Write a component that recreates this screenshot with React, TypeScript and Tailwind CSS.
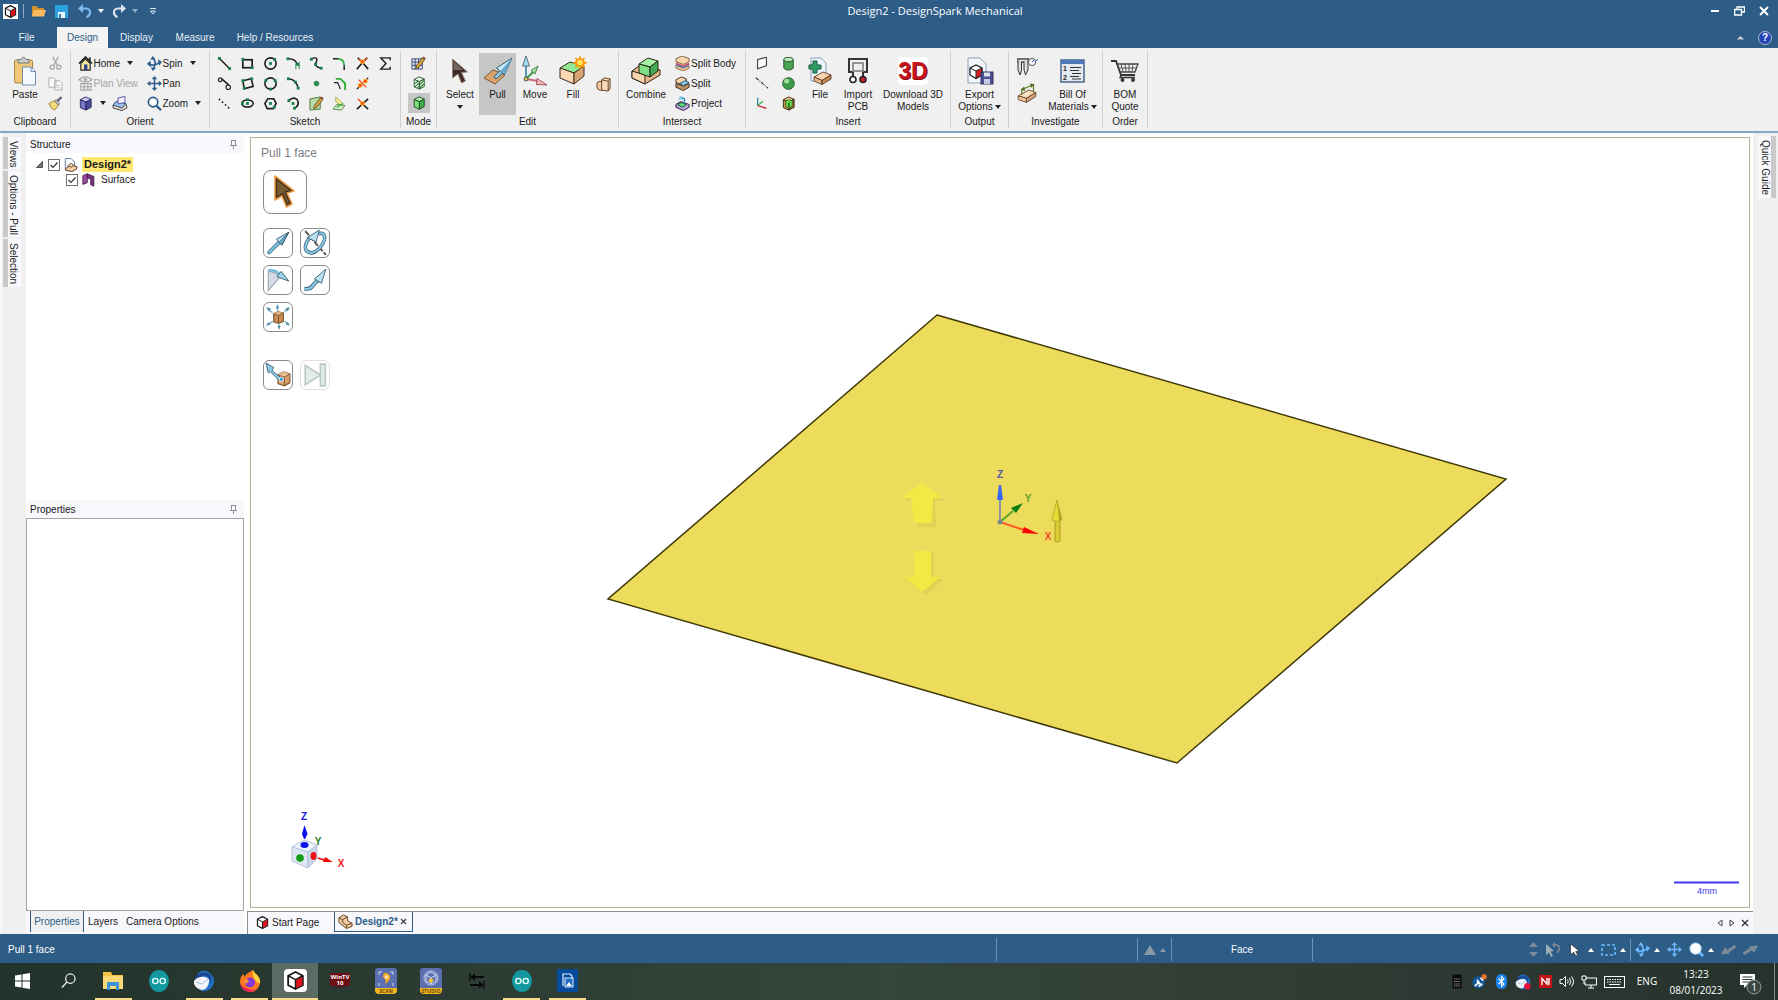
import type { ReactNode } from 'react';

type IconProps = { w?: number; h?: number; box?: string; children: ReactNode };

const Icon = ({ w = 15, h = w, box = '0 0 16 16', children }: IconProps) => (
    <svg width={w} height={h} viewBox={box} fill="none" className="shrink-0" aria-hidden="true">
        {children}
    </svg>
);

const Caret = ({ color = '#222', up = false }: { color?: string; up?: boolean }) => (
    <Icon w={6} h={4} box="0 0 6 4">
        <path d={up ? 'M0 4L3 0L6 4Z' : 'M0 0L3 4L6 0Z'} fill={color} />
    </Icon>
);

/* ---------- shared drawings ---------- */

type BoxColors = { top: string; left: string; right: string; line?: string };

const cubeShape = ({ top, left, right, line = '#1c1c1c' }: BoxColors) => (
    <g stroke={line} strokeWidth="1" strokeLinejoin="round">
        <path d="M2.500 4L8 1L14 3.500L8.500 6.500Z" fill={top} />
        <path d="M2.500 4L8.500 6.500V15L2.500 12.500Z" fill={left} />
        <path d="M8.500 6.500L14 3.500V12L8.500 15Z" fill={right} />
    </g>
);

const Logo = ({ size = 16 }: { size?: number }) => (
    <Icon w={size}>
        <path d="M8 .8L14.200 4V12L8 15.200L1.800 12V4Z" fill="#fff" stroke="#181818" strokeWidth="1.500" strokeLinejoin="round" />
        <path d="M8.300 7.300L13.800 4.500V11.700L8.300 14.600Z" fill="#e0131c" />
        <path d="M1.800 4L8 7.200L14.200 4M8 7.200V15" stroke="#181818" strokeWidth="1.200" />
    </Icon>
);

const SpinIcon = ({ color = '#2e5f8c' }: { color?: string }) => (
    <Icon w={15}>
        <path d="M1 8.500Q8 11.500 13 7M6.500 2Q11 8 6.500 14" stroke={color} strokeWidth="1.800" />
        <path d="M4 5L0 8L4 12ZM11.500 3.500L16 6L13 10.500ZM3.500 4L6 0L9 3.500ZM4 12L6 16L9.500 13Z" fill={color} />
    </Icon>
);

const PanIcon = ({ color = '#2e5f8c' }: { color?: string }) => (
    <Icon w={15}>
        <path d="M2 8H14M8 2V14" stroke={color} strokeWidth="1.600" />
        <path d="M3.500 5L0 8L3.500 11ZM12.500 5L16 8L12.500 11ZM5 3.500L8 0L11 3.500ZM5 12.500L8 16L11 12.500Z" fill={color} />
    </Icon>
);

const PencilShape = () => (
    <g>
        <path d="M6 10L12 2L14.500 4L8.500 12L5 13.500Z" fill="#d9a441" stroke="#4d3510" strokeWidth=".8" />
        <path d="M12 2L13.200 .5L15.800 2.500L14.500 4Z" fill="#8a4a2a" />
    </g>
);

const BrickShape = () => (
    <g stroke="#6b4a2c" strokeWidth=".8" strokeLinejoin="round">
        <path d="M1 11L10 6L16 8L8 13Z" fill="#fbe0c0" />
        <path d="M1 11L8 13V16.500L1 14Z" fill="#f3cba2" />
        <path d="M8 13L16 8V11.500L8 16.500Z" fill="#d3a077" />
    </g>
);

/* blue cone arrow used by the pull tools, drawn on a 24 grid */
const BlueArrow = () => (
    <g stroke="#33586c" strokeWidth=".8" strokeLinejoin="round">
        <path d="M2.500 20L12.500 10L14.500 12L4.500 22Q2 22.500 2.500 20Z" fill="#79bfe0" />
        <path d="M22 2L10.500 8.500L15.500 14Z" fill="#b9e0f0" />
        <path d="M22 2L13 11.500L15.500 14Z" fill="#6eaecd" />
    </g>
);

/* ---------- small ribbon icons ---------- */

const G = '#168048';
const K = '#1d1d1d';

const dots = (pts: [number, number][]) => (
    <>
        {pts.map(([x, y]) => (
            <rect key={`${x}-${y}`} x={x - 1.5} y={y - 1.5} width="3" height="3" fill={G} />
        ))}
    </>
);

const burst = (x: number, y: number) => (
    <g>
        <circle cx={x} cy={y} r="2.600" fill="#ffb52b" />
        <circle cx={x} cy={y} r="1.500" fill="#f1441c" />
    </g>
);

const sketchTools: { name: string; art: ReactNode }[] = [
    { name: 'Line', art: <><path d="M3 3L13 13" stroke={K} strokeWidth="1.600" />{dots([[2.5, 2.5], [13.5, 13.5]])}</> },
    { name: 'Rectangle', art: <><rect x="3" y="4" width="10" height="8.500" stroke={K} strokeWidth="1.800" />{dots([[3, 3.5], [13, 12.5]])}</> },
    { name: 'Circle', art: <><circle cx="8" cy="8" r="6" stroke={K} strokeWidth="1.700" />{dots([[8, 8], [12.5, 3.5]])}</> },
    { name: 'Tangent Arc', art: <><path d="M3 3Q10 3 12 9" stroke={K} strokeWidth="1.700" /><path d="M14 6V14M10.500 8V14" stroke={G} strokeWidth="1" />{dots([[2, 3], [12.5, 9]])}</> },
    { name: 'Spline', art: <><path d="M2.500 3Q10 0 8 6Q4 11 13 13" stroke={K} strokeWidth="1.600" />{dots([[2.5, 3.5], [7, 9], [13, 13]])}</> },
    { name: 'Corner', art: <><path d="M1 3H7M13 9V15" stroke={K} strokeWidth="1.600" /><path d="M6 3Q13 3 13 10" stroke="#2fae3c" strokeWidth="1.800" /></> },
    { name: 'Trim', art: <><path d="M2 14L8 7L14 14M8 7L3 2M8 7L13 2" stroke={K} strokeWidth="1.700" /><path d="M8 7L13 2M8 7L4 3" stroke="#ef4a20" strokeWidth="1.500" />{burst(8, 6)}</> },
    { name: 'Equation', art: <path d="M13 4.500V2H3L8.500 8L3 14H13V11.500" stroke={K} strokeWidth="1.500" /> },
    { name: 'Tangent Line', art: <><circle cx="3.500" cy="4" r="2" stroke={K} strokeWidth="1.200" /><path d="M5 3L12.500 9.500" stroke={K} strokeWidth="1.600" /><circle cx="12" cy="12" r="2.400" stroke={K} strokeWidth="1.200" /></> },
    { name: 'Three Point Rectangle', art: <><path d="M3 5L12 3L14 11L4.500 13.500Z" stroke={K} strokeWidth="1.700" />{dots([[3, 5], [12.5, 3], [4.5, 13]])}</> },
    { name: 'Three Point Circle', art: <><circle cx="8" cy="8" r="6" stroke={K} strokeWidth="1.700" />{dots([[3, 5], [13, 5], [8, 14]])}</> },
    { name: 'Three Point Arc', art: <><path d="M3 3Q11 4 13 13" stroke={K} strokeWidth="1.700" />{dots([[2.5, 3], [10, 6.500], [13, 13]])}</> },
    { name: 'Point', art: <><circle cx="8" cy="8" r="2.500" fill="#2a9a50" stroke="#146535" strokeWidth=".8" /></> },
    { name: 'Offset Curve', art: <><path d="M2 7H6L9 14" stroke={K} strokeWidth="1.300" /><path d="M4 3H9L14 8V15" stroke="#2fae3c" strokeWidth="2" /></> },
    { name: 'Split Curve', art: <><path d="M2 14L14 2" stroke={K} strokeWidth="1.500" strokeDasharray="4 1" /><path d="M4 4L12 12" stroke="#ef4a20" strokeWidth="1.200" />{burst(5.5, 10)}{burst(11, 5.5)}</> },
    { name: 'Construction Line', art: <path d="M2 3L14 14" stroke={K} strokeWidth="1.700" strokeDasharray="1.800 2.600" /> },
    { name: 'Ellipse', art: <><ellipse cx="8" cy="8" rx="6" ry="3.800" stroke={K} strokeWidth="1.700" />{dots([[8, 8], [8, 4], [2.5, 8]])}</> },
    { name: 'Polygon', art: <><path d="M5 3L11.500 3L14 8L11 13.500H4.500L2 8Z" stroke={K} strokeWidth="1.700" />{dots([[8, 8], [12, 12]])}</> },
    { name: 'Swept Arc', art: <><path d="M3 5Q8 0 12 4Q15 10 9 13" stroke={K} strokeWidth="1.700" />{dots([[3, 5], [7.5, 8], [9, 13]])}</> },
    { name: 'Face Curve', art: <><path d="M1 3L12 1V14L1 15Z" fill="#b8d9a8" stroke="#4d7a42" /><PencilShape /></> },
    { name: 'Project to Sketch', art: <><path d="M4 1L11 7V11L4 6Z" fill="#f6ef8f" stroke="#a09a50" strokeWidth=".8" /><path d="M1 14L5 9L14 10L10 15Z" fill="#d7ecc8" stroke="#568a48" /><path d="M5 12L12 8" stroke="#2fae3c" strokeWidth="1.500" /></> },
    { name: 'Create Corner', art: <><path d="M2 14L14 3M8 8.500L14 14" stroke={K} strokeWidth="1.700" /><path d="M3 3L8 8" stroke="#ef4a20" strokeWidth="1.500" />{burst(8, 8)}</> },
];

/* ---------- ribbon building blocks ---------- */

const Group = ({ label, width, children }: { label: string; width: string; children: ReactNode }) => (
    <section className={`flex h-[77px] shrink-0 flex-col border-r border-[#cfcfcf] ${width}`}>
        <div className="flex h-[65px] justify-center pt-0.5">{children}</div>
        <h2 className="text-center leading-3">{label}</h2>
    </section>
);

type BigProps = { lines: string[]; width: string; caret?: 'below' | 'inline'; active?: boolean; children: ReactNode };

const BigButton = ({ lines, width, caret, active, children }: BigProps) => (
    <button className={`flex h-[62px] shrink-0 flex-col items-center leading-3 ${width} ${active ? 'bg-[#c6c6c6]' : ''}`}>
        <span className="flex h-9 items-center justify-center">{children}</span>
        {lines.map((line, i) => (
            <span key={line} className="flex items-center gap-0.5 whitespace-nowrap">
                {line}
                {caret === 'inline' && i === lines.length - 1 && <Caret />}
            </span>
        ))}
        {caret === 'below' && <span className="flex h-3 items-center"><Caret /></span>}
    </button>
);

const SmallButton = ({ label, caret, dim, children }: { label?: string; caret?: boolean; dim?: boolean; children: ReactNode }) => (
    <button className={`flex h-5 items-center gap-px whitespace-nowrap ${dim ? 'text-[#a6a6a6]' : ''}`} disabled={dim}>
        {children}
        {label}
        {caret && <span className="ml-1.5"><Caret /></span>}
    </button>
);

const IconButton = ({ name, children }: { name: string; children: ReactNode }) => (
    <button aria-label={name} className="flex h-5 w-full items-center justify-center">{children}</button>
);

const Ribbon = () => (
    <div className="flex h-[83px] shrink-0 overflow-hidden bg-[#f0f0f0] pt-[3px]">
        <Group label="Clipboard" width="w-[71px]">
            <BigButton lines={['Paste']} width="w-11">
                <Icon w={24} h={30} box="0 0 24 30">
                    <rect x="1.500" y="4" width="18" height="23" rx="1.500" fill="#f0c877" stroke="#a88345" />
                    <path d="M5 7V3.500H8Q10.500 -1 13 3.500H16V7Z" fill="#c8ccd0" stroke="#777" />
                    <path d="M9.500 11H18L22.500 15.500V29H9.500Z" fill="#f5f9fe" stroke="#6f8fb5" />
                    <path d="M18 11V15.500H22.500" stroke="#6f8fb5" />
                </Icon>
            </BigButton>
            <div className="w-5 pr-1">
                <IconButton name="Cut">
                    <Icon><path d="M5 1L10 10M11 1L6 10" stroke="#aaa" strokeWidth="1.400" /><circle cx="4.500" cy="12" r="2.200" stroke="#aaa" strokeWidth="1.400" /><circle cx="11.500" cy="12" r="2.200" stroke="#aaa" strokeWidth="1.400" /></Icon>
                </IconButton>
                <IconButton name="Copy">
                    <Icon><path d="M1 2H6L8.500 4.500V12H1ZM7 5H12L15 8V15H7Z" fill="#f7f7f7" stroke="#b0b0b0" /><path d="M9 10H13M9 12.500H13" stroke="#c4c4c4" /></Icon>
                </IconButton>
                <IconButton name="Format Painter">
                    <Icon><path d="M1 8L7 5L11 10L7 15Q3 14 1 8Z" fill="#f3dc7a" stroke="#9a8130" /><path d="M7 5L9 4L12.500 8.500L11 10Z" fill="#c9ccd0" stroke="#666" strokeWidth=".8" /><path d="M10 5.500L14.500 1" stroke="#6a5a7c" strokeWidth="2.400" /></Icon>
                </IconButton>
            </div>
        </Group>

        <Group label="Orient" width="w-[139px]">
            <div className="w-[69px]">
                <SmallButton label="Home" caret>
                    <Icon><path d="M1 8L8 1L15 8" stroke="#222" strokeWidth="1.600" /><path d="M11.500 1.500H13.500V6L11.500 4Z" fill="#222" /><path d="M3 8L8 3L13 8V15H3Z" fill="#f4e59a" stroke="#222" strokeWidth="1.200" /><rect x="6.500" y="9" width="3.500" height="6" fill="#27408f" /></Icon>
                </SmallButton>
                <SmallButton label="Plan View" dim>
                    <Icon><path d="M1 4Q8 -2 15 4Q8 9 1 4Z" stroke="#a5a5a5" strokeWidth="1.300" /><circle cx="8" cy="3.800" r="1.800" fill="#a5a5a5" /><path d="M3 8H14V15H3ZM3 11.500H14M6.500 8V15M10.500 8V15" stroke="#a5a5a5" strokeWidth="1.200" /></Icon>
                </SmallButton>
                <div className="flex gap-1.5">
                    <SmallButton caret><Icon>{cubeShape({ top: '#c8c8f4', left: '#7a78c8', right: '#4c4a9c', line: '#2b2a63' })}</Icon></SmallButton>
                    <SmallButton><Icon w={16}><path d="M1 10L4 7L14 9L15 13L10 15.500L1 13Z" fill="#f6d8b4" stroke="#3c4a66" /><path d="M1 10L4 6.500L14 8.500L10 13Z" fill="#9cc4ec" stroke="#2f4f7c" /><path d="M6 3L13 1.500V7.500L6 9Z" fill="#f2f2ff" stroke="#5c5ab0" /></Icon></SmallButton>
                </div>
            </div>
            <div className="w-14">
                <SmallButton label="Spin" caret><SpinIcon /></SmallButton>
                <SmallButton label="Pan"><PanIcon /></SmallButton>
                <SmallButton label="Zoom" caret>
                    <Icon><circle cx="6.500" cy="6.500" r="5" fill="#fff" stroke="#2e5f8c" strokeWidth="1.800" /><path d="M10 10.500L15 15" stroke="#2e5f8c" strokeWidth="2.400" /></Icon>
                </SmallButton>
            </div>
        </Group>

        <Group label="Sketch" width="w-[191px]">
            <div className="grid w-[184px] grid-cols-8 content-start">
                {sketchTools.map((tool, i) => (
                    <div key={tool.name} className={i === 8 || i === 15 ? 'col-start-1' : ''}>
                        <IconButton name={tool.name}><Icon>{tool.art}</Icon></IconButton>
                    </div>
                ))}
            </div>
        </Group>

        <Group label="Mode" width="w-9">
            <div className="w-[22px]">
                <IconButton name="Sketch Mode"><Icon><path d="M1 3H12V14H1ZM1 6.500H12M1 10H12M4.500 3V14M8 3V14" fill="#dfe5f4" stroke="#39456f" /><PencilShape /></Icon></IconButton>
                <IconButton name="Section Mode"><Icon w={14}>{cubeShape({ top: '#e9f8e4', left: '#fff', right: '#d8f3d2', line: '#1e4f22' })}<path d="M3 9L7 6M3 12.500L8.500 8M6 13.500L8.500 11M9 10L13.500 5M9 13.500L13.500 9" stroke="#2a7a30" strokeWidth="1.200" /></Icon></IconButton>
                <div className="bg-[#c6c6c6]">
                    <IconButton name="3D Mode"><Icon w={14}>{cubeShape({ top: '#b7f2ae', left: '#7ddf7a', right: '#3fae4a', line: '#14451b' })}</Icon></IconButton>
                </div>
            </div>
        </Group>

        <Group label="Edit" width="w-[182px]">
            <BigButton lines={['Select']} width="w-[38px]" caret="below">
                <Icon w={18} h={26} box="0 0 18 26"><path d="M1.500 1L16.500 14L10.500 14.500L14.500 23L10.500 25L7 16L1.500 20Z" fill="#3c2c26" stroke="#9a8478" /><path d="M2.500 3L12 12L2.500 12Z" fill="#77675f" /></Icon>
            </BigButton>
            <BigButton lines={['Pull']} width="w-[37px]" active>
                <Icon w={30} box="0 0 30 30">
                    <path d="M1 22L10 14L22 19L12 28Z" fill="#d9a36c" stroke="#7d5530" />
                    <path d="M11 21L18 13L21 16L13 23Z" fill="#8fcbe6" stroke="#35596e" />
                    <path d="M29 2L13.500 12L21.500 18.500Z" fill="#cbe9f6" stroke="#35596e" />
                    <path d="M29 2L17.500 15L21.500 18.500Z" fill="#66a8cb" />
                </Icon>
            </BigButton>
            <BigButton lines={['Move']} width="w-[38px]">
                <Icon w={26} h={30} box="0 0 26 30">
                    <path d="M4 23V8" stroke="#5595b5" strokeWidth="2" /><path d="M4 0L7.500 10H.5Z" fill="#a9dcef" stroke="#33586c" strokeWidth=".8" />
                    <path d="M4 23L12 15" stroke="#3a9a4a" strokeWidth="2" /><path d="M16 10L9 14.500L13 18Z" fill="#9be09f" stroke="#2d6b35" strokeWidth=".8" />
                    <path d="M4 23L16 25" stroke="#c06f78" strokeWidth="2" /><path d="M25 29L15 22.500L14.500 28.500Z" fill="#f3b9bd" stroke="#93333f" strokeWidth=".8" />
                    <circle cx="4" cy="23" r="2" fill="#d9d060" stroke="#333" strokeWidth=".8" />
                </Icon>
            </BigButton>
            <BigButton lines={['Fill']} width="w-[38px]">
                <Icon w={28} h={30} box="0 0 28 30">
                    <g stroke="#3b2b1a" strokeLinejoin="round">
                        <path d="M1 12L11 6L25 10L15 17Z" fill="#8eea96" />
                        <path d="M1 12L15 17V28L1 22Z" fill="#fbd9b4" />
                        <path d="M15 17L25 10V20L15 28Z" fill="#d9a576" />
                    </g>
                    <path d="M21 -1L22.500 3L26 1.500L25 5L28.500 7L25 8.500L26 12L22.500 10.500L21 14L19.500 10.500L16 12L17 8.500L13.500 7L17 5L16 1.500L19.500 3Z" fill="#f79a0b" />
                    <circle cx="21" cy="6.500" r="2.800" fill="#ffe65c" />
                </Icon>
            </BigButton>
            <button aria-label="Blend" className="flex h-[62px] w-[22px] items-center justify-center">
                <Icon><path d="M1 7Q1 5 4 4.500L8 6V14L4 14Q1 13 1 11Z" fill="#f3c79d" stroke="#5f3f22" /><path d="M6 3L9 1L15 2V12L13 15L6 14Z" fill="#f9d9b8" stroke="#5f3f22" /><path d="M6 3L13 4.500V15M13 4.500L15 2" stroke="#5f3f22" /></Icon>
            </button>
        </Group>

        <Group label="Intersect" width="w-[127px]">
            <BigButton lines={['Combine']} width="w-[54px]">
                <Icon w={30} h={28} box="0 0 30 28">
                    <g stroke="#2d2417" strokeLinejoin="round">
                        <path d="M1 14L8 9L29 13V18L14 27L1 21Z" fill="#e8b888" />
                        <path d="M1 14L14 18V27L1 21Z" fill="#f9d5ae" />
                        <path d="M8 7L17 1L27 4L19 10Z" fill="#a5f2a5" />
                        <path d="M8 7L19 10V20L8 16Z" fill="#7fe288" />
                        <path d="M19 10L27 4V14L19 20Z" fill="#43ab55" />
                    </g>
                </Icon>
            </BigButton>
            <div className="w-[72px] pl-0.5">
                <SmallButton label="Split Body"><Icon><path d="M1 10L9 13L15 10V13L9 16L1 13Z" fill="#f2c597" stroke="#7a4e2c" strokeWidth=".8" /><path d="M1 7L9 10L15 7V9.500L9 12.500L1 9.500Z" fill="#e0454f" /><path d="M1 8.800L9 11.500L15 9V10.200L9 13L1 10.500Z" fill="#4c86d0" /><path d="M1 3L7 0L15 2.500V6L9 9L1 6Z" fill="#f9d5ae" stroke="#5f3f22" strokeWidth=".8" /></Icon></SmallButton>
                <SmallButton label="Split"><Icon><path d="M1 4L7 1L12 3V6L7 9L1 7Z" fill="#f9d5ae" stroke="#3b2b1a" /><path d="M1 8L9 11L15 8V12L9 15.500L1 12Z" fill="#c2925f" stroke="#3b2b1a" /><path d="M5 8L11 5L15 7L9 10Z" fill="#8fd0ef" stroke="#28546e" /></Icon></SmallButton>
                <SmallButton label="Project"><Icon><path d="M1 9L6 6L15 9V12L9 15.500L1 12Z" fill="#b8a6d8" stroke="#241a3d" /><path d="M3 9L7 7L12 9L8 12Z" fill="#5ee07d" stroke="#174d25" /><path d="M5 1L10 3V8" stroke="#3b8fc4" strokeWidth="1.600" /><path d="M3 4L6 0L8 4Z" fill="#8fd0ef" /></Icon></SmallButton>
            </div>
        </Group>

        <Group label="Insert" width="w-[205px]">
            <div className="grid w-[54px] shrink-0 grid-cols-2 content-start">
                <IconButton name="Plane"><Icon w={14}><path d="M3 4L13 1.500V11L3 14.500Z" fill="#fff" stroke="#333" strokeWidth="1.200" /></Icon></IconButton>
                <IconButton name="Cylinder"><Icon><path d="M3 4V13Q8 17 13 13V4Z" fill="#4ca554" stroke="#1d5325" /><ellipse cx="8" cy="3.800" rx="5" ry="2.300" fill="#b9e8b4" stroke="#1d5325" /></Icon></IconButton>
                <IconButton name="Axis"><Icon w={14}><path d="M1 2L15 14" stroke="#333" strokeWidth="1.300" strokeDasharray="4 1.500 1 1.500" /></Icon></IconButton>
                <IconButton name="Sphere"><Icon><circle cx="8" cy="8" r="6.300" fill="#3d9a49" stroke="#1d5325" strokeWidth=".8" /><circle cx="6" cy="5.500" r="2.600" fill="#a8dfa6" /></Icon></IconButton>
                <IconButton name="Origin"><Icon w={14}><path d="M3 2V11" stroke="#2d8aa0" strokeWidth="1.500" /><path d="M3 11L9 6" stroke="#2fae3c" strokeWidth="1.400" /><path d="M3 11L13 14" stroke="#c1343c" strokeWidth="1.600" /></Icon></IconButton>
                <IconButton name="Shell"><Icon>{cubeShape({ top: '#f2c78f', left: '#c98f4e', right: '#a06c34', line: '#3d2a10' })}<path d="M5 5L8.500 4L12 5V11L8.500 13L5 11Z" fill="#6ade55" stroke="#1e5a1a" strokeWidth=".8" /><path d="M8.500 7V12" stroke="#1e5a1a" strokeWidth="1.500" /></Icon></IconButton>
            </div>
            <BigButton lines={['File']} width="w-9">
                <Icon w={24} h={28} box="0 0 24 28">
                    <path d="M3 1H13L18 6V24H3Z" fill="#eef4fb" stroke="#8ba0bb" />
                    <path d="M5 4H9V8H13V12H9V16H5V12H1V8H5Z" fill="#2fa065" stroke="#14583a" />
                    <path d="M6 20L15 15L23 18L14 23.500Z" fill="#f9d5ae" stroke="#4a2d16" strokeWidth=".8" /><path d="M6 20L14 23.500V27.500L6 24Z" fill="#eab888" stroke="#4a2d16" strokeWidth=".8" /><path d="M14 23.500L23 18V22L14 27.500Z" fill="#c48a56" stroke="#4a2d16" strokeWidth=".8" />
                </Icon>
            </BigButton>
            <BigButton lines={['Import', 'PCB']} width="w-10">
                <Icon w={22} h={26} box="0 0 22 26"><path d="M6 14H2V1H20V14H16M6 14V18M16 14V18" stroke="#333" strokeWidth="2" /><rect x="6" y="5" width="10" height="8" fill="#eee" stroke="#777" strokeWidth="1.500" /><circle cx="6" cy="21.500" r="3" fill="#fff" stroke="#222" strokeWidth="1.600" /><circle cx="16" cy="21.500" r="3" fill="#d21f27" stroke="#222" strokeWidth="1.600" /></Icon>
            </BigButton>
            <BigButton lines={['Download 3D', 'Models']} width="w-[70px]">
                <span className="flex h-7 w-[30px] items-center justify-center rounded bg-white text-[23px] leading-7 font-bold text-[#c4161c] [text-shadow:1px_1px_0_#8a0a10]">3D</span>
            </BigButton>
        </Group>

        <Group label="Output" width="w-[58px]">
            <BigButton lines={['Export', 'Options']} width="w-14" caret="inline">
                <Icon w={28} h={28} box="0 0 28 28">
                    <path d="M2 1H14L20 7V26H2Z" fill="#f3f7fc" stroke="#8ba0bb" />
                    <path d="M4 11L10 8L16 11V18L10 21.500L4 18Z" fill="#fff" stroke="#222" strokeWidth="1.300" /><path d="M10 14L16 11V18L10 21.500Z" fill="#dd1c22" stroke="#222" /><path d="M4 11L10 14" stroke="#222" />
                    <rect x="15" y="15" width="12" height="12" fill="#4d4f8e" stroke="#2e2f5c" /><rect x="18" y="15.500" width="6" height="4" fill="#dfe0f0" /><rect x="18" y="22" width="6" height="5" fill="#c7c8e4" />
                </Icon>
            </BigButton>
        </Group>

        <Group label="Investigate" width="w-[94px]">
            <div className="flex w-[34px] flex-col items-center gap-1.5 pt-1">
                <button aria-label="Measure">
                    <Icon w={22} h={20} box="0 0 22 20"><path d="M1 2H13M1 5H13" stroke="#444" strokeWidth="1.300" /><path d="M2 2V13L4 18L5.500 13V5M8 5V13L9.500 18L12 13V2" fill="#ddd" stroke="#333" /><circle cx="16" cy="5" r="3.600" fill="#f5f7fb" stroke="#555" /><path d="M16 5L18 3M19 5L22 2" stroke="#2a52c8" /></Icon>
                </button>
                <button aria-label="Mass Properties">
                    <Icon w={20} h={20} box="0 0 17 17"><BrickShape /><path d="M4 5.500L14 1.500M4 5V10M14 1V7" stroke="#5d7a1c" strokeWidth="1" /><path d="M3 6L6 3L7 6.500ZM15 1L11 .5L12 4Z" fill="#4f6f1c" /></Icon>
                </button>
            </div>
            <BigButton lines={['Bill Of', 'Materials']} width="w-[58px]" caret="inline">
                <Icon w={25} h={24} box="0 0 25 24">
                    <rect x="1" y="1" width="23" height="22" fill="#e4e9f1" stroke="#3f5c86" strokeWidth="1.400" /><rect x="1" y="1" width="23" height="4" fill="#4a78b8" />
                    <path d="M10 8.500H21M10 11.500H19M12 14.500H21M10 17.500H19M12 20H21" stroke="#333" strokeWidth="1.200" />
                    <text x="3" y="12" fontSize="7" fontWeight="bold" fill="#222">1</text><text x="3" y="21" fontSize="7" fontWeight="bold" fill="#222">2</text>
                </Icon>
            </BigButton>
        </Group>

        <Group label="Order" width="w-[45px]">
            <BigButton lines={['BOM', 'Quote']} width="w-11">
                <Icon w={28} h={24} box="0 0 28 24"><path d="M0 2H5L10 16H24" stroke="#333" strokeWidth="1.800" /><path d="M6 5H27L24 13H9" stroke="#444" strokeWidth="1.300" /><path d="M10 5L12 13M14 5L15 13M18 5V13M22 5L21 13M7 9H26" stroke="#555" /><path d="M10 16L9 18.500H24" stroke="#333" strokeWidth="1.300" /><circle cx="11.500" cy="21" r="2" fill="#333" /><circle cx="22" cy="21" r="2" fill="#333" /></Icon>
            </BigButton>
        </Group>
    </div>
);

/* ---------- title bar and ribbon tabs ---------- */

const TitleBar = () => (
    <header className="flex h-[22px] items-center text-white">
        <div className="flex w-40 shrink-0 items-center">
            <span className="ml-[3px] bg-white p-px"><Logo size={13} /></span>
            <span className="mx-[5px] h-3.5 w-px bg-[#8fabc4]" />
            <button aria-label="Open" className="mx-[3px]">
                <Icon w={14} h={12} box="0 0 14 12"><path d="M0 1H5L6 3H12V11H0Z" fill="#d3912f" /><path d="M2 5H14L12 11.500H0Z" fill="#f8bd62" /></Icon>
            </button>
            <button aria-label="Save" className="ml-1.5">
                <Icon w={13} h={13} box="0 0 13 13"><path d="M0 0H13V13H0Z" fill="#2ba3e0" /><rect x="3" y="7" width="7" height="6" fill="#eaf6fc" /><rect x="4" y="9" width="2" height="4" fill="#2f7ea8" /></Icon>
            </button>
            <button aria-label="Undo" className="ml-2.5 flex items-center gap-1.5">
                <Icon w={14} h={14} box="0 0 14 14"><path d="M2 4.500H8Q12.500 5 12 9Q11.500 12 8.500 13" stroke="#7cbcf5" strokeWidth="2.200" /><path d="M0 4.500L5 0V9Z" fill="#7cbcf5" /></Icon>
                <Caret color="#fff" />
            </button>
            <button aria-label="Redo" className="ml-2 flex items-center gap-1.5">
                <Icon w={14} h={14} box="0 0 14 14"><path d="M12 4.500H6Q1.500 5 2 9Q2.500 12 5.500 13" stroke="#dde3ea" strokeWidth="2.200" /><path d="M14 4.500L9 0V9Z" fill="#dde3ea" /></Icon>
                <Caret color="#8fabc4" />
            </button>
            <button aria-label="Customize" className="ml-3">
                <Icon w={6} h={7} box="0 0 6 7"><path d="M0 .5H6M.5 3H5.500L3 6Z" stroke="#dbe5ee" /></Icon>
            </button>
        </div>
        <h1 className="flex-1 text-center font-['Open_Sans',sans-serif] text-[11px]">Design2 - DesignSpark Mechanical</h1>
        <div className="flex items-center justify-end gap-3.5 pr-[9px]">
            <button aria-label="Minimize"><Icon w={10} h={10} box="0 0 10 10"><path d="M1 5H9" stroke="#fff" strokeWidth="2" /></Icon></button>
            <button aria-label="Restore"><Icon w={11} h={10} box="0 0 11 10"><path d="M3 3V1H10.500V6H8" stroke="#fff" strokeWidth="1.300" /><path d="M.7 3.500H7.500V9H.7Z" stroke="#fff" strokeWidth="1.300" /></Icon></button>
            <button aria-label="Close"><Icon w={10} h={10} box="0 0 10 10"><path d="M1 1L9 9M9 1L1 9" stroke="#fff" strokeWidth="2" /></Icon></button>
        </div>
    </header>
);

const RibbonTabs = () => (
    <nav className="flex h-[26px] items-end pt-[5px] text-[#e8eff6]">
        <button className="h-[21px] w-[57px] pr-1">File</button>
        <button className="h-[21px] w-[51px] bg-[#f3f3f3] text-[#2d5c87]">Design</button>
        <button className="h-[21px] w-[57px]">Display</button>
        <button className="h-[21px] w-[60px]">Measure</button>
        <button className="h-[21px] w-[100px]">Help / Resources</button>
        <div className="flex h-[21px] flex-1 items-center justify-end gap-3.5 pr-1.5">
            <button aria-label="Collapse ribbon"><Icon w={7} h={5} box="0 0 7 5"><path d="M0 4.500L3.500 1L7 4.500Z" fill="#d8d8d8" /><path d="M2.500 5L3.500 4L4.500 5Z" fill="#2d5c87" /></Icon></button>
            <button aria-label="Help" className="flex size-[14px] items-center justify-center rounded-full border border-[#aeb9cf] bg-[#2443b5] font-bold text-white">?</button>
        </div>
    </nav>
);

/* ---------- side panels ---------- */

const SideTab = ({ label, height, right }: { label: string; height: string; right?: boolean }) => (
    <button
        className={`flex w-[18px] items-center bg-[#f8f8fd] pt-1 leading-3 [writing-mode:vertical-rl] ${height} ${
            right ? 'border-r-[5px] border-[#c9c9c9]' : 'border-l-[5px] border-[#c9c9c9] pr-1'
        }`}
    >
        {label}
    </button>
);

const Pin = () => (
    <button aria-label="Auto hide">
        <Icon w={7} h={9} box="0 0 7 9"><path d="M1.500 0V5M5.500 0V5M1.500 .5H5.500M0 5.500H7M3.500 6V9" stroke="#8d8d96" /></Icon>
    </button>
);

const PanelHeader = ({ title }: { title: string }) => (
    <div className="flex h-[18px] shrink-0 items-center justify-between bg-[#f7f7fc] pr-[7px] pl-1">
        <h2>{title}</h2>
        <Pin />
    </div>
);

const TreeCheck = ({ label }: { label: string }) => (
    <span className="relative size-3">
        <input type="checkbox" defaultChecked aria-label={label} className="peer block size-3 appearance-none border border-[#707070] bg-white" />
        <svg viewBox="0 0 12 12" fill="none" className="pointer-events-none absolute inset-0 hidden peer-checked:block">
            <path d="M2.500 6L5 8.500L9.500 3.500" stroke="#333" strokeWidth="1.200" />
        </svg>
    </span>
);

const Structure = () => (
    <section>
        <PanelHeader title="Structure" />
        <ul className="pt-1 pl-2.5">
            <li className="flex h-[15px] items-center">
                <Icon w={7} h={7} box="0 0 7 7"><path d="M6.500 .5V6.500H.5Z" fill="#777" stroke="#333" strokeWidth=".8" /></Icon>
                <span className="ml-[5px] flex items-center gap-1">
                    <TreeCheck label="Show Design2" />
                    <Icon w={14}><path d="M1.500 .5H8L12 4.500V13H1.500Z" fill="#fafcff" stroke="#58718f" /><path d="M2 12L8 8L15 10L14 13L9 15.500L2 14Z" fill="#f5cfa4" stroke="#4a2d16" /><path d="M4 9L8 6L11 8L9 10.500Z" fill="#f5cfa4" stroke="#4a2d16" strokeWidth=".8" /></Icon>
                    <span className="bg-[#ffe772] px-0.5 text-[11px] leading-[15px] font-bold">Design2*</span>
                </span>
            </li>
            <li className="flex h-[15px] items-center gap-1 pl-[30px]">
                <TreeCheck label="Show Surface" />
                <Icon w={14}><path d="M1 3L6 1V11L1 13Z" fill="#a04fa8" stroke="#3c1642" /><path d="M6 1L13.500 4V15L10 13.500V7L6 5.500Z" fill="#7a3283" stroke="#3c1642" /></Icon>
                <span className="pl-px">Surface</span>
            </li>
        </ul>
    </section>
);

const Properties = () => (
    <section className="flex flex-col">
        <PanelHeader title="Properties" />
        <div className="flex-1 border border-[#a3a3a3] bg-white" />
        <div className="flex h-[23px] shrink-0 items-start bg-[#f7f7fc] pl-1">
            <button className="h-[21px] w-[54px] border-x border-[#2d5c87] bg-[#f0f0f0] text-[#2d5c87]">Properties</button>
            <button className="h-[21px] px-1">Layers</button>
            <button className="h-[21px] px-1">Camera Options</button>
        </div>
    </section>
);

/* ---------- drawing area ---------- */

const Scene = () => (
    <svg viewBox="251 138 1498 769" preserveAspectRatio="xMidYMid slice" className="absolute inset-0 size-full" aria-hidden="true">
        <path d="M937 315L1506 479L1177 763L608 599Z" fill="#eddc5c" stroke="#3f3806" strokeWidth="1.500" />

        {/* pull direction hints */}
        <g fill="#e3d155">
            <path d="M925 486L946 501H935L936 527H918L917 501H905Z" />
            <path d="M917 553H934L934 579H944L926 595L908 580H918Z" />
        </g>
        <g fill="#f3e844">
            <path d="M922 483L943 498H933L932 523H914L911 498H901Z" />
            <path d="M914 551H931L931 577H940L922 592L905 577H915Z" />
        </g>

        {/* origin triad */}
        <g strokeWidth="2">
            <path d="M1000 522V498" stroke="#8f96a0" />
            <path d="M1000 522L1013 511" stroke="#5ba327" />
            <path d="M1000 522L1024 530" stroke="#ff5a26" />
        </g>
        <path d="M999 485H1001L1003 500H997Z" fill="#3a66f5" />
        <path d="M1023 503L1016 513L1011 508Z" fill="#0c7d12" />
        <path d="M1039 534L1022 533L1024 527Z" fill="#fb0404" />
        <circle cx="1000" cy="522" r="2.500" fill="#7f858c" />
        <g fontSize="10" fontWeight="bold" textAnchor="middle">
            <text x="1000" y="478" fill="#5d59a8">Z</text>
            <text x="1028" y="502" fill="#5ba327">Y</text>
            <text x="1048" y="540" fill="#f5512a">X</text>
        </g>

        {/* face normal */}
        <path d="M1055 521H1060V541Q1057 543 1055 541Z" fill="#ddcb33" stroke="#a08f20" strokeWidth=".8" />
        <path d="M1057 500L1062 520Q1057 523 1052 520Z" fill="#eadb34" stroke="#b3a228" strokeWidth=".8" />
        <path d="M1057 500L1062 520L1059 521Z" fill="#b5a428" />

        {/* view orientation cube */}
        <path d="M292 847L304 840L317 845L308 852Z" fill="#eef4fb" stroke="#b4c4d8" />
        <path d="M292 847L308 852V868L292 861Z" fill="#dde7f4" stroke="#b4c4d8" />
        <path d="M308 852L317 845V859L308 868Z" fill="#c9d6ea" stroke="#b4c4d8" />
        <ellipse cx="304.500" cy="845" rx="4" ry="3" fill="#0b10ee" />
        <circle cx="300" cy="858" r="3.800" fill="#0f9d13" />
        <ellipse cx="313.500" cy="856" rx="3" ry="4" fill="#ee1111" />
        <path d="M304.500 825L307.500 834L305 839H304L302 834Z" fill="#0b10ee" />
        <path d="M318 858L324 860" stroke="#f50808" strokeWidth="1.500" />
        <path d="M325 857L333 862L323 862Z" fill="#f50808" />
        <g fontSize="10" fontWeight="bold" textAnchor="middle">
            <text x="304" y="820" fill="#1b1be0">Z</text>
            <text x="318" y="845" fill="#1d7d22">Y</text>
            <text x="341" y="867" fill="#f01818">X</text>
        </g>

        {/* scale */}
        <path d="M1674 882.500H1739" stroke="#3a3af2" strokeWidth="2" />
        <text x="1707" y="894" fontSize="9" textAnchor="middle" fill="#3a3af2">4mm</text>
    </svg>
);

const pullTools: { name: string; dim?: boolean; gap?: boolean; art: ReactNode }[] = [
    { name: 'Pull Direction', art: <BlueArrow /> },
    {
        name: 'Revolve',
        art: (
            <>
                <path d="M3 1L22 23" stroke="#555" strokeWidth="1.800" strokeDasharray="5 1.500" />
                <path d="M8 6Q1 14 4 19Q9 24 16 17Q23 9 20 4Q18 2 15 4" stroke="#33586c" strokeWidth="3.200" />
                <path d="M8 6Q1 14 4 19Q9 24 16 17Q23 9 20 4Q18 2 15 4" stroke="#86c8e6" strokeWidth="2" />
                <path d="M16 0L5 7L13 11Z" fill="#b9e0f0" stroke="#33586c" strokeWidth=".8" />
            </>
        ),
    },
    {
        name: 'Draft',
        art: (
            <>
                <path d="M3 4V22L14 9Q9 4 3 4Z" fill="#d5dae4" stroke="#9aa3b3" />
                <path d="M3 3Q10 2 15 8" stroke="#79bfe0" strokeWidth="2.400" />
                <path d="M22 13L11 9L15 4Z" fill="#9fd4ea" stroke="#33586c" strokeWidth=".8" />
            </>
        ),
    },
    {
        name: 'Sweep',
        art: (
            <>
                <path d="M2 20Q8 21 10 17Q12 14 16 12" stroke="#33586c" strokeWidth="3.600" />
                <path d="M2 20Q8 21 10 17Q12 14 16 12" stroke="#86c8e6" strokeWidth="2.200" />
                <path d="M22 2L11.500 11L18 15Z" fill="#b9e0f0" stroke="#33586c" strokeWidth=".8" />
            </>
        ),
    },
    {
        name: 'Scale Body',
        art: (
            <>
                <path d="M8 9L12 7L17 8.500V16L12.500 18L8 16.500Z" fill="#c98b54" stroke="#7d5530" />
                <path d="M8 9L12.500 10.500L17 8.500L12 7Z" fill="#e6b585" />
                <path d="M8 9L12.500 10.500L17 8.500M12.500 10.500V18" stroke="#7d5530" strokeWidth=".8" />
                <path d="M7 8L3 5M18 7L21 4M7 16L3 19M18 16L21 18M11.500 6V3M13 19V21" stroke="#7fb4cf" strokeWidth="1.500" />
                <path d="M1 3L5.500 4L3.500 7ZM23 3L19 4L21 7ZM1 20L3 16.500L5 19ZM23 20L19 19L21 16.500ZM11.500 0L13 4H10ZM13 24L11.500 20H14.500Z" fill="#4f8cab" />
            </>
        ),
    },
    {
        name: 'Up To',
        gap: true,
        art: (
            <>
                <path d="M12 12L17 9L23 11V19L18 22L12 20Z" fill="#d9a06a" stroke="#7d5530" />
                <path d="M12 12L18 14L23 11L17 9Z" fill="#ecbf92" />
                <path d="M12 12L18 14L23 11M18 14V22" stroke="#7d5530" strokeWidth=".8" />
                <path d="M1 1L8 5L6.500 8L14 14L15 16L12 16L5 9L3 10Z" fill="#8fcbe6" stroke="#33586c" strokeWidth=".8" />
                <circle cx="15" cy="16" r="2" fill="#2d9fe0" stroke="#fff" strokeWidth=".8" />
            </>
        ),
    },
    {
        name: 'Full Pull',
        dim: true,
        art: (
            <>
                <path d="M3 3L17 12L3 21Z" fill="#e2ece8" stroke="#bcc8c4" strokeWidth="1.500" />
                <path d="M17 2H21.500V22H17Z" fill="#e2ece8" stroke="#bcc8c4" strokeWidth="1.500" />
            </>
        ),
    },
];

const ToolPalette = () => (
    <div className="relative w-24 pt-2 pl-2.5">
        <p className="text-xs leading-[14px] whitespace-nowrap text-[#7c7c7c]">Pull 1 face</p>
        <div className="pt-2.5 pl-0.5">
            <button aria-label="Select" className="flex size-11 items-center justify-center rounded-lg border border-[#8b8b8b] bg-white">
                <Icon w={24} h={34} box="0 0 24 34"><path d="M2 1L21 16L14 18L19 29L13.500 32L9 21L2 25Z" fill="#775a32" stroke="#ee9a42" strokeWidth="1.600" strokeLinejoin="round" /><path d="M3.500 4L18 15.500L12 17L17 28L14 29.500L9.500 18.500L3.500 22Z" stroke="#3e2d17" strokeWidth="1.200" /></Icon>
            </button>
            <div className="mt-3.5 grid w-[67px] grid-cols-2 gap-[7px]">
                {pullTools.map((tool) => (
                    <button
                        key={tool.name}
                        aria-label={tool.name}
                        disabled={tool.dim}
                        className={`flex size-[30px] items-center justify-center rounded-md border bg-white ${
                            tool.dim ? 'border-[#e0e0e0]' : 'border-[#8b8b8b]'
                        } ${tool.gap ? 'col-start-1' : ''} ${tool.gap || tool.dim ? 'mt-[21px]' : ''}`}
                    >
                        <Icon w={26} box="0 0 24 24">{tool.art}</Icon>
                    </button>
                ))}
            </div>
        </div>
    </div>
);

const DocumentTabs = () => (
    <div className="-ml-[3px] flex h-[23px] shrink-0 items-start border-t border-l border-[#8f8f8f] bg-[#f7f7fc]">
        <button className="flex h-[21px] w-[86px] items-center gap-[3px] pl-2"><Logo size={13} />Start Page</button>
        <div className="flex h-5 w-[79px] items-center gap-0.5 border border-t-0 border-[#2d5c87] pl-[3px] text-[#2d5c87]">
            <button className="flex items-center gap-0.5 font-bold">
                <Icon><path d="M1 4L6 1L10 3V7L15 10V13L9 15.500L1 9Z" fill="#f5cfa4" stroke="#5a3b1e" /><path d="M1 4L5 6V9L9 12V15M5 6L10 3M9 12L15 10" stroke="#5a3b1e" /></Icon>
                Design2*
            </button>
            <button aria-label="Close Design2"><Icon w={7} h={7} box="0 0 7 7"><path d="M1 1L6 6M6 1L1 6" stroke="#444" strokeWidth="1.300" /></Icon></button>
        </div>
        <div className="flex h-[21px] flex-1 items-center justify-end gap-1.5 pr-1">
            <button aria-label="Previous tab"><Icon w={6} h={8} box="0 0 6 8"><path d="M5 1V7L1 4Z" stroke="#444" /></Icon></button>
            <button aria-label="Next tab"><Icon w={6} h={8} box="0 0 6 8"><path d="M1 1V7L5 4Z" stroke="#444" /></Icon></button>
            <button aria-label="Close tab"><Icon w={8} h={8} box="0 0 8 8"><path d="M1 1L7 7M7 1L1 7" stroke="#333" strokeWidth="1.400" /></Icon></button>
        </div>
    </div>
);

/* ---------- status bar ---------- */

const StatusCaret = () => <Caret color="#fff" up />;

const StatusBar = () => (
    <footer className="flex h-[29px] shrink-0 items-center bg-[#2d5c87] pt-0.5 text-white">
        <p className="min-w-0 flex-1 pl-2">Pull 1 face</p>
        <div className="h-[23px] w-[141px] border-l border-[#6f93b4]" />
        <div className="flex h-[23px] w-[34px] items-center justify-center gap-1 border-l border-[#6f93b4]">
            <Icon w={12} h={10} box="0 0 12 10"><path d="M6 0L12 10H0Z" fill="#8a99a8" /></Icon>
            <Caret color="#8a99a8" up />
        </div>
        <div className="flex h-[23px] w-[142px] items-center justify-center border-x border-[#6f93b4]">Face</div>
        <div className="flex w-[465px] items-center justify-end pr-5">
            <div className="flex items-center gap-[7px] pr-1">
                <Icon w={9} h={15} box="0 0 9 15"><path d="M4.500 0L9 5H0ZM4.500 15L9 10H0Z" fill="#7d8b98" /></Icon>
                <Icon w={16}><path d="M1 2L9 9L5.500 9.500L8 14L6 15L4 10.500L1 13Z" fill="#9dabb8" /><path d="M9 3H12Q15 4 14 8L12 11" stroke="#7d8b98" strokeWidth="1.500" /><path d="M7 3L10 0V6Z" fill="#7d8b98" /></Icon>
                <Icon w={13}><path d="M3 1L14 10L9.500 10.500L12 15L9.500 16L7 11.500L3 14.500Z" fill="#fff" stroke="#333" /></Icon>
                <StatusCaret />
                <div className="flex items-center gap-1">
                    <Icon w={15} h={12} box="0 0 15 12"><rect x="1" y="1" width="13" height="10" stroke="#6cb9ff" strokeWidth="1.600" strokeDasharray="3 2" /></Icon>
                    <StatusCaret />
                </div>
            </div>
            <div className="flex h-[22px] items-center gap-[7px] border-l border-[#6f93b4] pl-1">
                <div className="flex items-center gap-1">
                    <SpinIcon color="#6cb9ff" />
                    <StatusCaret />
                </div>
                <PanIcon color="#6cb9ff" />
                <div className="flex items-center gap-1">
                    <Icon w={15}><path d="M10 10L15 15" stroke="#6cb9ff" strokeWidth="3" /><circle cx="7" cy="7" r="6" fill="#fff" stroke="#b9dcfb" /></Icon>
                    <StatusCaret />
                </div>
                <Icon w={15} h={10} box="0 0 15 10"><path d="M14.500 1L7 6" stroke="#7d8b98" strokeWidth="3" /><path d="M0 9.500L4 2L9 8.500Z" fill="#7d8b98" /></Icon>
                <Icon w={15} h={10} box="0 0 15 10"><path d="M.5 9L8 4" stroke="#7d8b98" strokeWidth="3" /><path d="M15 .5L11 8L6 1.500Z" fill="#7d8b98" /></Icon>
            </div>
        </div>
    </footer>
);

/* ---------- windows taskbar ---------- */

const arduino = (
    <Icon w={20} h={22} box="0 0 20 22"><ellipse cx="10" cy="11" rx="10" ry="11" fill="#12989e" /><circle cx="6.300" cy="11" r="2.600" stroke="#e6ffff" strokeWidth="1.400" /><circle cx="13.700" cy="11" r="2.600" stroke="#e6ffff" strokeWidth="1.400" /></Icon>
);

const thunderbird = (
    <>
        <path d="M4 4Q10 -2 17 3Q23 9 20 15Q17 22 9 21Q6 20 5 18Q14 16 12 9Z" fill="#2272c9" />
        <path d="M1 11Q5 6 12 7Q17 8 16 12Q15 19 9 20Q3 19 1 14Z" fill="#f1f5fb" />
        <path d="M4 5Q10 0 17 4Q20 9 17 14Q18 8 13 6Q8 5 1 10Z" fill="#1c4a96" />
        <path d="M3 12L9 14L15 9" stroke="#a5b9d6" />
    </>
);

const dsApp = (art: ReactNode, label: string) => (
    <Icon w={22} h={26} box="0 0 22 26">
        <rect width="22" height="24" rx="3" fill="#5a6fb0" />
        {art}
        <path d="M0 20H22V22Q22 26 18 26H4Q0 26 0 22Z" fill="#f4b61d" />
        <text x="11" y="25" fontSize="5" fontWeight="bold" textAnchor="middle" fill="#5c4a12">{label}</text>
    </Icon>
);

const taskbarApps: { name: string; open?: boolean; active?: boolean; art: ReactNode }[] = [
    { name: 'Start', art: <Icon w={15} h={16} box="0 0 15 16"><path d="M0 2.500L6.500 1.500V7.500H0ZM7.500 1.300L15 0V7.500H7.500ZM0 8.500H6.500V14.500L0 13.500ZM7.500 8.500H15V16L7.500 14.700Z" fill="#fff" /></Icon> },
    { name: 'Search', art: <Icon w={15}><circle cx="10" cy="6" r="5" stroke="#f3f3f3" strokeWidth="1.300" /><path d="M6.500 9.500L1 15.500" stroke="#f3f3f3" strokeWidth="1.400" /></Icon> },
    { name: 'File Explorer', open: true, art: <Icon w={20} h={18} box="0 0 20 18"><path d="M0 0H8L9.500 3H20V17H0Z" fill="#f5c244" /><path d="M0 4H20V17H0Z" fill="#fcd975" /><path d="M4 10H16V18H13V14H7V18H4Z" fill="#3a94dd" /></Icon> },
    { name: 'Arduino', art: arduino },
    { name: 'Thunderbird', open: true, art: <Icon w={22} box="0 0 22 22">{thunderbird}</Icon> },
    {
        name: 'Firefox',
        open: true,
        art: (
            <Icon w={22} box="0 0 22 22">
                <path d="M1 12Q1 6 5 4V7Q9 2 14 0Q15 3 18 5Q22 9 21 13Q19 22 11 22Q2 21 1 12Z" fill="#ff7a1c" />
                <path d="M14 0Q15 3 18 5Q22 9 21 13Q18 14 15 8Q13 4 14 0Z" fill="#ffd43b" />
                <path d="M1 12Q2 21 11 22Q15 22 18 19Q12 21 7 18Q2 16 1 12Z" fill="#f5245c" />
                <circle cx="11" cy="12.500" r="5" fill="#8539d6" /><path d="M6 9Q9 9 10 11L7 14Q5 12 6 9Z" fill="#ff9a2e" />
            </Icon>
        ),
    },
    { name: 'DesignSpark Mechanical', open: true, active: true, art: <span className="rounded-sm bg-white p-0.5"><Logo size={19} /></span> },
    { name: 'WinTV', art: <Icon w={20} h={15} box="0 0 20 15"><rect width="20" height="13" fill="#6e0f16" /><path d="M6 13H14L16 15H4Z" fill="#3a2528" /><text x="10" y="6" fontSize="6" fontWeight="bold" textAnchor="middle" fill="#fff">WinTV</text><text x="10" y="12" fontSize="6" fontWeight="bold" textAnchor="middle" fill="#fff">10</text></Icon> },
    { name: 'Scan', art: dsApp(<><path d="M4 7V4H7M15 4H18V7M4 15V18M18 15V18" stroke="#d5def6" /><path d="M8 9Q8 4 12 5Q16 7 15 11L10 17Q12 12 8 9Z" fill="#f6a521" /><circle cx="11.500" cy="9" r="2" fill="#fae0a5" /></>, 'SCAN') },
    { name: 'Studio', art: dsApp(<><circle cx="11" cy="10" r="7" stroke="#d5def6" strokeWidth=".8" /><path d="M11 4L16 7V13L11 16L6 13V7ZM6 7L11 10L16 7M11 10V16" stroke="#d5def6" /><path d="M8 12L11 10.500L14 12L11 15Z" fill="#f6c521" /></>, 'STUDIO') },
    { name: 'Transfer', art: <Icon w={16} h={18} box="0 0 16 18"><path d="M3 5H15M1 13H13" stroke="#080808" strokeWidth="1.800" /><path d="M1 5L6 1.500V8.500ZM15 13L10 9.500V16.500Z" fill="#080808" /><path d="M1 1V9M15 9V17" stroke="#080808" strokeWidth="1.200" /></Icon> },
    { name: 'Arduino IDE', open: true, art: arduino },
    { name: 'Photo Gallery', open: true, art: <Icon w={21} h={23} box="0 0 21 23"><rect width="21" height="23" fill="#064a9c" /><path d="M6 17V5H13L15 7V9" stroke="#e1efff" strokeWidth="1.200" /><rect x="8" y="9" width="8" height="9" fill="#1f6cc4" stroke="#e1efff" /><path d="M9 17L12 13L15 17Z" fill="#fff" /></Icon> },
];

const trayIcons: { name: string; art: ReactNode }[] = [
    { name: 'Phone', art: <Icon w={10} h={15} box="0 0 10 15"><rect x=".5" y=".5" width="9" height="14" rx="1" fill="#0b0b0b" /><path d="M2 5H8M2 7.500H8M2 10H8M2 12H8" stroke="#8e8e8e" strokeDasharray="1.500 .7" /></Icon> },
    { name: 'Updates', art: <Icon w={15}><circle cx="7" cy="9" r="6.500" fill="#12589c" /><path d="M3 13L8 8M6 6Q5 11 11 11L7 13M9 4L12 7" stroke="#fff" strokeWidth="1.800" /><circle cx="13" cy="3" r="2.800" fill="#f1742f" /></Icon> },
    { name: 'Bluetooth', art: <Icon w={13} h={15} box="0 0 13 15"><rect x="1" width="11" height="15" rx="5.500" fill="#1683f0" /><path d="M3.500 4.500L9 10L6.500 12.500V2.500L9 5L3.500 10" stroke="#fff" strokeWidth="1.100" /></Icon> },
    { name: 'Mail', art: <Icon w={16} box="0 0 22 22">{thunderbird}<circle cx="17" cy="17" r="4.500" fill="#e8123c" /></Icon> },
    { name: 'Adobe', art: <Icon w={13} box="0 0 13 13"><rect width="13" height="13" fill="#c3131a" /><path d="M3 10V3.500L8 9V3M10 3V10" stroke="#fff" strokeWidth="1.400" /></Icon> },
    { name: 'Volume', art: <Icon w={16} h={13} box="0 0 16 13"><path d="M1 4.500H3.500L6.500 1.500V11.500L3.500 8.500H1Z" stroke="#fff" /><path d="M8.500 4.500Q10 6.500 8.500 8.500M10.500 3Q13 6.500 10.500 10M12.500 1.500Q16.500 6.500 12.500 11.500" stroke="#fff" /></Icon> },
    { name: 'Network', art: <Icon w={16} h={14} box="0 0 16 14"><path d="M5 3H15.500V10H4V7M7 13H13M10 10V13M1 1H5V5H1ZM3 5V9" stroke="#fff" /></Icon> },
];

const Tray = () => (
    <div className="flex items-center text-white">
        {trayIcons.map((item) => (
            <button key={item.name} aria-label={item.name} className="flex w-[22px] justify-center">{item.art}</button>
        ))}
        <button aria-label="Keyboard" className="flex w-7 justify-center">
            <Icon w={21} h={12} box="0 0 21 12"><rect x=".5" y=".5" width="20" height="11" stroke="#fff" /><path d="M3 3.500H18M3 6H18" stroke="#fff" strokeDasharray="1.500 1" /><path d="M5 8.500H16" stroke="#fff" /></Icon>
        </button>
        <span className="w-[38px] text-center">ENG</span>
        <time className="w-[60px] text-center leading-4">13:23<br />08/01/2023</time>
        <button aria-label="Notifications" className="relative mr-2.5 ml-3 h-7 w-[26px]">
            <Icon w={26} h={28} box="0 0 26 28">
                <path d="M2 6H17V17H9L6 20V17H2Z" fill="#fff" />
                <path d="M4.500 9H14.500M4.500 11.500H14.500M4.500 14H11" stroke="#2b3a31" />
                <circle cx="16" cy="19" r="7" fill="#3c4641" stroke="#8f9892" />
                <text x="16" y="23" fontSize="10" textAnchor="middle" fill="#fff">1</text>
            </Icon>
        </button>
        <span className="mr-[3px] h-[37px] w-px bg-[#7f8b84]" />
    </div>
);

const Taskbar = () => (
    <div className="flex h-[37px] shrink-0 justify-between bg-linear-to-r from-[#22332b] via-[#36453c] to-[#26332d] font-['Open_Sans',sans-serif]">
        <div className="flex w-[590px]">
            {taskbarApps.map((app) => (
                <button
                    key={app.name}
                    aria-label={app.name}
                    className={`flex flex-1 flex-col items-center ${app.active ? 'bg-[#5c6b63]' : ''}`}
                >
                    <span className="flex h-[35px] items-center">{app.art}</span>
                    {app.open && <span className={`h-0.5 bg-[#fbdc8c] ${app.active ? 'w-full' : 'w-[37px]'}`} />}
                </button>
            ))}
        </div>
        <Tray />
    </div>
);

export default function App() {
    return (
        <div className="flex h-screen flex-col overflow-hidden bg-white font-['Liberation_Sans',Arial,sans-serif] text-[10px] text-[#1a1a1a]">
            <div className="shrink-0 bg-[#2d5c87]">
                <TitleBar />
                <RibbonTabs />
            </div>
            <Ribbon />
            <main className="flex min-h-0 flex-1 border-t-2 border-[#86a5c2]">
                <aside className="flex w-[26px] shrink-0 flex-col gap-0.5 border-l-2 border-[#f8f8fd] bg-[#f0f0f0] pt-1 pl-px">
                    <SideTab label="Views" height="h-8" />
                    <SideTab label="Options - Pull" height="h-[66px]" />
                    <SideTab label="Selection" height="h-12" />
                </aside>
                <div className="grid w-[218px] shrink-0 grid-rows-[365fr_434fr] pt-0.5">
                    <Structure />
                    <Properties />
                </div>
                <div className="ml-1.5 flex min-w-0 flex-1 flex-col pt-1">
                    <div className="relative mr-[3px] mb-[3px] min-h-0 flex-1 overflow-hidden border border-[#b9b294] bg-white">
                        <Scene />
                        <ToolPalette />
                    </div>
                    <DocumentTabs />
                </div>
                <aside className="flex w-[25px] shrink-0 flex-col items-end bg-[#f0f0f0] pt-[3px] pr-0.5">
                    <SideTab label="Quick Guide" height="h-[62px]" right />
                </aside>
            </main>
            <StatusBar />
            <Taskbar />
        </div>
    );
}
